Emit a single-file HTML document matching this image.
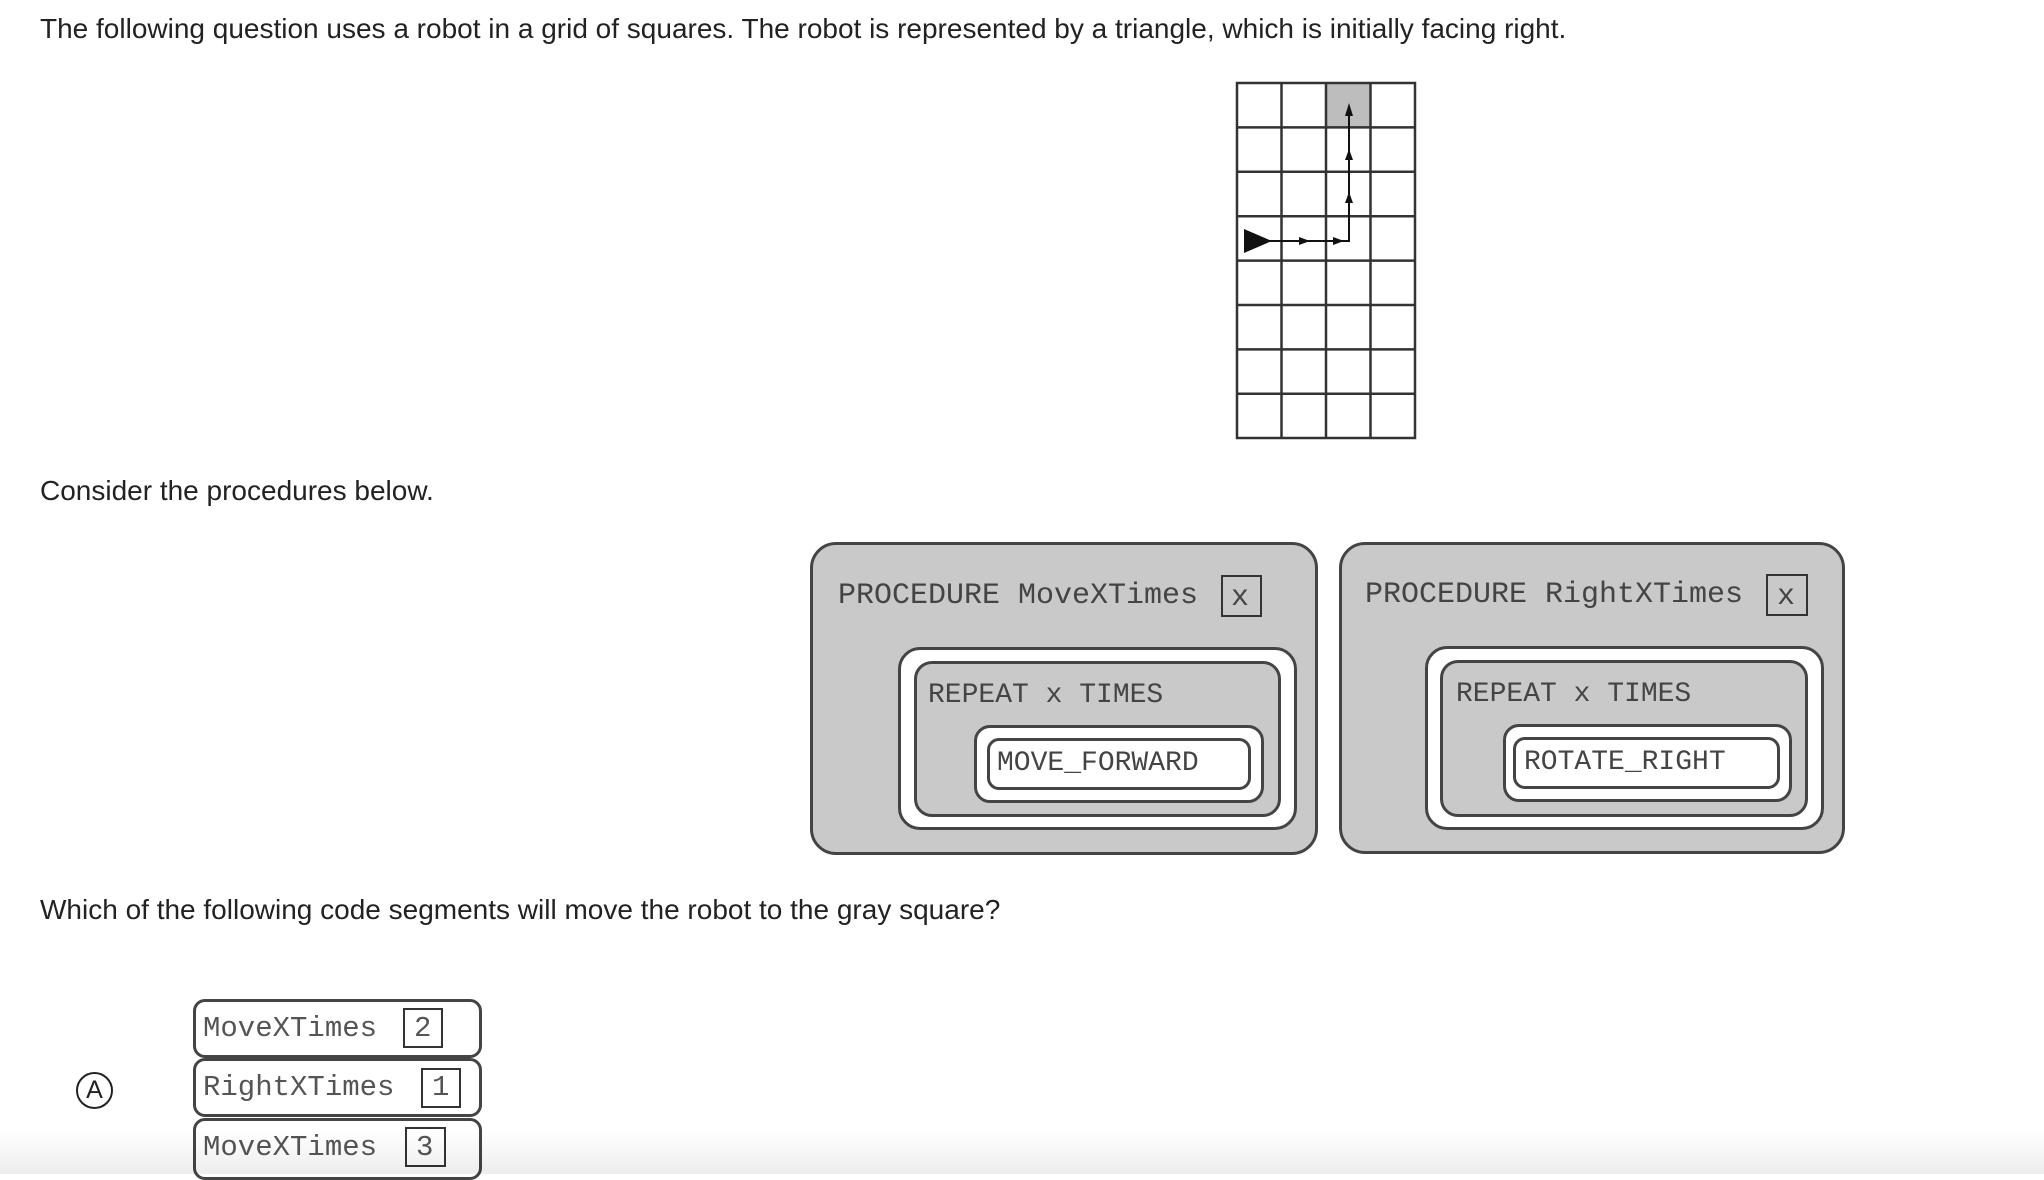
<!DOCTYPE html>
<html><head><meta charset="utf-8"><style>
body{margin:0;width:2044px;height:1174px;background:#fff;position:relative;overflow:hidden;font-family:"Liberation Sans",Arial,sans-serif;color:#222}
.t{position:absolute;left:40px;font-size:28px;white-space:nowrap;line-height:1}
.m{font-family:"Liberation Mono","Courier New",monospace;color:#444;position:absolute;white-space:nowrap;line-height:1}
.a{position:absolute;box-sizing:border-box}
</style></head><body>
<div class="t" style="top:15px">The following question uses a robot in a grid of squares. The robot is represented by a triangle, which is initially facing right.</div>

<svg class="a" style="left:1230px;top:78px" width="200" height="370" viewBox="1230 78 200 370">
<rect x="1326" y="83" width="44.5" height="44.4" fill="#bdbdbd"/>
<g stroke="#333" stroke-width="2.5" fill="none">
<rect x="1237" y="83" width="178" height="355"/>
<line x1="1281.5" y1="83" x2="1281.5" y2="438"/><line x1="1326" y1="83" x2="1326" y2="438"/><line x1="1370.5" y1="83" x2="1370.5" y2="438"/>
<line x1="1237" y1="127.4" x2="1415" y2="127.4"/><line x1="1237" y1="171.8" x2="1415" y2="171.8"/><line x1="1237" y1="216.2" x2="1415" y2="216.2"/><line x1="1237" y1="260.6" x2="1415" y2="260.6"/><line x1="1237" y1="305" x2="1415" y2="305"/><line x1="1237" y1="349.4" x2="1415" y2="349.4"/><line x1="1237" y1="393.8" x2="1415" y2="393.8"/>
</g>
<path d="M1268 241 H1349 V106" stroke="#111" stroke-width="2" fill="none"/>
<polygon points="1244,229 1244,253 1272,241" fill="#111"/>
<polygon points="1299,237 1299,245 1310,241" fill="#111"/>
<polygon points="1333,237 1333,245 1344,241" fill="#111"/>
<polygon points="1345,203 1353,203 1349,192" fill="#111"/>
<polygon points="1345,160 1353,160 1349,149" fill="#111"/>
<polygon points="1345,116 1353,116 1349,103" fill="#111"/>
</svg>

<div class="t" style="top:477px">Consider the procedures below.</div>

<div class="a" style="left:810px;top:542px;width:508px;height:313px;background:#c9c9c9;border:3px solid #444;border-radius:26px"></div>
<div class="m" style="left:838px;top:581px;font-size:30px">PROCEDURE MoveXTimes</div>
<div class="a" style="left:1221px;top:575px;width:41px;height:42px;border:2.5px solid #333"></div>
<div class="m" style="left:1231px;top:583px;font-size:30px">x</div>
<div class="a" style="left:898px;top:647px;width:399px;height:183px;background:#fff;border:3px solid #444;border-radius:22px"></div>
<div class="a" style="left:914px;top:661px;width:367px;height:156px;background:#c9c9c9;border:3px solid #444;border-radius:18px"></div>
<div class="m" style="left:928px;top:682px;font-size:28px">REPEAT x TIMES</div>
<div class="a" style="left:974px;top:725px;width:290px;height:78px;background:#fff;border:3px solid #444;border-radius:16px"></div>
<div class="a" style="left:987px;top:738px;width:264px;height:52px;background:#fff;border:3px solid #444;border-radius:12px"></div>
<div class="m" style="left:997px;top:750px;font-size:28px">MOVE_FORWARD</div>

<div class="a" style="left:1339px;top:542px;width:506px;height:312px;background:#c9c9c9;border:3px solid #444;border-radius:26px"></div>
<div class="m" style="left:1365px;top:580px;font-size:30px">PROCEDURE RightXTimes</div>
<div class="a" style="left:1766px;top:574px;width:42px;height:42px;border:2.5px solid #333"></div>
<div class="m" style="left:1777px;top:582px;font-size:30px">x</div>
<div class="a" style="left:1425px;top:646px;width:399px;height:184px;background:#fff;border:3px solid #444;border-radius:22px"></div>
<div class="a" style="left:1440px;top:660px;width:368px;height:157px;background:#c9c9c9;border:3px solid #444;border-radius:18px"></div>
<div class="m" style="left:1456px;top:681px;font-size:28px">REPEAT x TIMES</div>
<div class="a" style="left:1503px;top:724px;width:289px;height:78px;background:#fff;border:3px solid #444;border-radius:16px"></div>
<div class="a" style="left:1513px;top:737px;width:267px;height:52px;background:#fff;border:3px solid #444;border-radius:12px"></div>
<div class="m" style="left:1524px;top:749px;font-size:28px">ROTATE_RIGHT</div>

<div class="t" style="top:896px">Which of the following code segments will move the robot to the gray square?</div>

<div class="a" style="left:76px;top:1072px;width:37px;height:37px;border:2px solid #222;border-radius:50%;text-align:center;font-size:25px;line-height:33px">A</div>

<div class="a" style="left:193px;top:999px;width:289px;height:59px;border:3px solid #444;border-radius:12px;background:#fff"></div>
<div class="m" style="left:203px;top:1014px;font-size:29px;color:#555">MoveXTimes</div>
<div class="a" style="left:403px;top:1008px;width:40px;height:40px;border:2.5px solid #333"></div>
<div class="m" style="left:414px;top:1014px;font-size:29px;color:#555">2</div>

<div class="a" style="left:193px;top:1058px;width:289px;height:59px;border:3px solid #444;border-radius:12px;background:#fff"></div>
<div class="m" style="left:203px;top:1073px;font-size:29px;color:#555">RightXTimes</div>
<div class="a" style="left:421px;top:1068px;width:40px;height:40px;border:2.5px solid #333"></div>
<div class="m" style="left:432px;top:1073px;font-size:29px;color:#555">1</div>

<div class="a" style="left:193px;top:1118px;width:289px;height:62px;border:3px solid #444;border-radius:12px;background:#fff"></div>
<div class="m" style="left:203px;top:1133px;font-size:29px;color:#555">MoveXTimes</div>
<div class="a" style="left:405px;top:1127px;width:41px;height:40px;border:2.5px solid #333"></div>
<div class="m" style="left:416px;top:1133px;font-size:29px;color:#555">3</div>

<div class="a" style="left:0;top:1130px;width:2044px;height:44px;background:linear-gradient(to bottom,rgba(0,0,0,0),rgba(0,0,0,0.07));pointer-events:none"></div>
</body></html>
